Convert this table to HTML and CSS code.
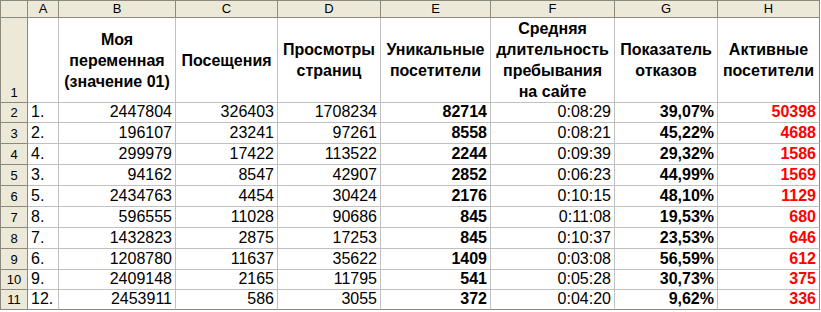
FILE: index.html
```html
<!DOCTYPE html>
<html lang="ru">
<head>
<meta charset="utf-8">
<title>Sheet</title>
<link rel="stylesheet" href="styles.css">
</head>
<body>
<div class="sheet">
  <div class="ch corner"></div>
  <div class="ch">A</div><div class="ch">B</div><div class="ch">C</div><div class="ch">D</div><div class="ch">E</div><div class="ch">F</div><div class="ch">G</div><div class="ch">H</div>

  <div class="rh">1</div>
  <div class="c hd"></div>
  <div class="c hd">Моя<br>переменная<br>(значение 01)</div>
  <div class="c hd">Посещения</div>
  <div class="c hd">Просмотры<br>страниц</div>
  <div class="c hd">Уникальные<br>посетители</div>
  <div class="c hd">Средняя<br>длительность<br>пребывания<br>на сайте</div>
  <div class="c hd">Показатель<br>отказов</div>
  <div class="c hd">Активные<br>посетители</div>

  <div class="rh">2</div><div class="c">1.</div><div class="c n">2447804</div><div class="c n">326403</div><div class="c n">1708234</div><div class="c n b">82714</div><div class="c n">0:08:29</div><div class="c n b">39,07%</div><div class="c n b red">50398</div>
  <div class="rh">3</div><div class="c">2.</div><div class="c n">196107</div><div class="c n">23241</div><div class="c n">97261</div><div class="c n b">8558</div><div class="c n">0:08:21</div><div class="c n b">45,22%</div><div class="c n b red">4688</div>
  <div class="rh">4</div><div class="c">4.</div><div class="c n">299979</div><div class="c n">17422</div><div class="c n">113522</div><div class="c n b">2244</div><div class="c n">0:09:39</div><div class="c n b">29,32%</div><div class="c n b red">1586</div>
  <div class="rh">5</div><div class="c">3.</div><div class="c n">94162</div><div class="c n">8547</div><div class="c n">42907</div><div class="c n b">2852</div><div class="c n">0:06:23</div><div class="c n b">44,99%</div><div class="c n b red">1569</div>
  <div class="rh">6</div><div class="c">5.</div><div class="c n">2434763</div><div class="c n">4454</div><div class="c n">30424</div><div class="c n b">2176</div><div class="c n">0:10:15</div><div class="c n b">48,10%</div><div class="c n b red">1129</div>
  <div class="rh">7</div><div class="c">8.</div><div class="c n">596555</div><div class="c n">11028</div><div class="c n">90686</div><div class="c n b">845</div><div class="c n">0:11:08</div><div class="c n b">19,53%</div><div class="c n b red">680</div>
  <div class="rh">8</div><div class="c">7.</div><div class="c n">1432823</div><div class="c n">2875</div><div class="c n">17253</div><div class="c n b">845</div><div class="c n">0:10:37</div><div class="c n b">23,53%</div><div class="c n b red">646</div>
  <div class="rh">9</div><div class="c">6.</div><div class="c n">1208780</div><div class="c n">11637</div><div class="c n">35622</div><div class="c n b">1409</div><div class="c n">0:03:08</div><div class="c n b">56,59%</div><div class="c n b red">612</div>
  <div class="rh">10</div><div class="c">9.</div><div class="c n">2409148</div><div class="c n">2165</div><div class="c n">11795</div><div class="c n b">541</div><div class="c n">0:05:28</div><div class="c n b">30,73%</div><div class="c n b red">375</div>
  <div class="rh">11</div><div class="c">12.</div><div class="c n">2453911</div><div class="c n">586</div><div class="c n">3055</div><div class="c n b">372</div><div class="c n">0:04:20</div><div class="c n b">9,62%</div><div class="c n b red">336</div>
</div>
</body>
</html>
```
FILE: styles.css
```css
html, body {
  margin: 0;
  padding: 0;
  background: #ffffff;
}

.sheet {
  display: grid;
  grid-template-columns: 27px 31px 117px 102px 103px 110px 124px 103px 102px;
  grid-template-rows: 17px 85px 20px 21px 21px 21px 21px 21px 21px 21px 20px 20px;
  width: max-content;
  border-top: 1px solid #8c8a7e;
  border-left: 1px solid #8c8a7e;
  font-family: "Liberation Sans", Arial, sans-serif;
  color: #000;
}

.sheet > div {
  box-sizing: border-box;
  overflow: hidden;
  white-space: nowrap;
}

.ch {
  background: #ece9d8;
  border-right: 1px solid #8c8a7e;
  border-bottom: 1px solid #8c8a7e;
  font-size: 13px;
  line-height: 16px;
  text-align: center;
}

.rh {
  background: #ece9d8;
  border-right: 1px solid #8c8a7e;
  border-bottom: 1px solid #8c8a7e;
  font-size: 13px;
  line-height: 19px;
  display: flex;
  align-items: flex-end;
  justify-content: center;
}

.c {
  border-right: 1px solid #c0c0c0;
  border-bottom: 1px solid #c0c0c0;
  font-size: 16px;
  line-height: 20px;
  padding: 0 3px;
  display: flex;
  align-items: flex-end;
}

.n {
  justify-content: flex-end;
}

.b {
  font-weight: bold;
}

.red {
  color: #ff0000;
}

.hd {
  font-weight: bold;
  line-height: 21px;
  text-align: center;
  justify-content: center;
  align-items: center;
  padding: 0 1px;
}

.sheet > div:nth-child(9n) {
  border-right-color: #8c8a7e;
}

.sheet > div:nth-last-child(-n+9) {
  border-bottom-color: #8c8a7e;
}
```
